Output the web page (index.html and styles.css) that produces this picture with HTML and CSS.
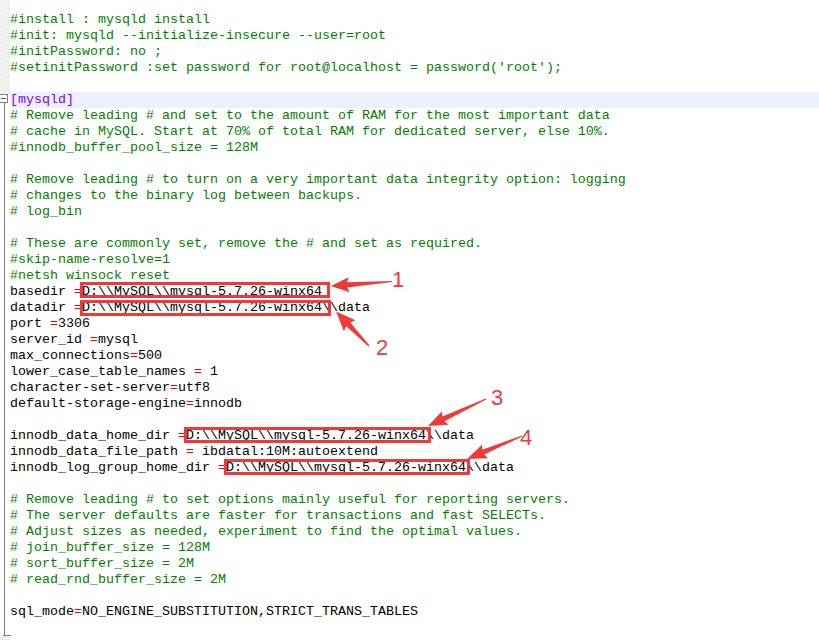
FILE: index.html
```html
<!DOCTYPE html>
<html>
<head>
<meta charset="utf-8">
<link rel="stylesheet" href="styles.css">
</head>
<body>
<div class="editor">
  <div class="margin">
    <div class="margin-top"></div>
    <div class="fold-box"><span class="minus"></span></div>
    <div class="fold-line"></div>
    <div class="fold-end"></div>
    <div class="margin-bottom"></div>
  </div>
  <div class="code">
    <div class="row c">#install : mysqld install</div>
    <div class="row c">#init: mysqld --initialize-insecure --user=root</div>
    <div class="row c">#initPassword: no ;</div>
    <div class="row c">#setinitPassword :set password for root@localhost = password('root');</div>
    <div class="row"></div>
    <div class="row cur"><span class="s">[mysqld]</span></div>
    <div class="row c"># Remove leading # and set to the amount of RAM for the most important data</div>
    <div class="row c"># cache in MySQL. Start at 70% of total RAM for dedicated server, else 10%.</div>
    <div class="row c">#innodb_buffer_pool_size = 128M</div>
    <div class="row"></div>
    <div class="row c"># Remove leading # to turn on a very important data integrity option: logging</div>
    <div class="row c"># changes to the binary log between backups.</div>
    <div class="row c"># log_bin</div>
    <div class="row"></div>
    <div class="row c"># These are commonly set, remove the # and set as required.</div>
    <div class="row c">#skip-name-resolve=1</div>
    <div class="row c">#netsh winsock reset</div>
    <div class="row">basedir <span class="o">=</span>D:\\MySQL\\mysql-5.7.26-winx64</div>
    <div class="row">datadir <span class="o">=</span>D:\\MySQL\\mysql-5.7.26-winx64\\data</div>
    <div class="row">port <span class="o">=</span>3306</div>
    <div class="row">server_id <span class="o">=</span>mysql</div>
    <div class="row">max_connections<span class="o">=</span>500</div>
    <div class="row">lower_case_table_names <span class="o">=</span> 1</div>
    <div class="row">character-set-server<span class="o">=</span>utf8</div>
    <div class="row">default-storage-engine<span class="o">=</span>innodb</div>
    <div class="row"></div>
    <div class="row">innodb_data_home_dir <span class="o">=</span>D:\\MySQL\\mysql-5.7.26-winx64\\data</div>
    <div class="row">innodb_data_file_path <span class="o">=</span> ibdatal:10M:autoextend</div>
    <div class="row">innodb_log_group_home_dir <span class="o">=</span>D:\\MySQL\\mysql-5.7.26-winx64\\data</div>
    <div class="row"></div>
    <div class="row c"># Remove leading # to set options mainly useful for reporting servers.</div>
    <div class="row c"># The server defaults are faster for transactions and fast SELECTs.</div>
    <div class="row c"># Adjust sizes as needed, experiment to find the optimal values.</div>
    <div class="row c"># join_buffer_size = 128M</div>
    <div class="row c"># sort_buffer_size = 2M</div>
    <div class="row c"># read_rnd_buffer_size = 2M</div>
    <div class="row"></div>
    <div class="row">sql_mode<span class="o">=</span>NO_ENGINE_SUBSTITUTION,STRICT_TRANS_TABLES</div>
  </div>
</div>
<svg class="annot" width="819" height="640" viewBox="0 0 819 640">
  <g fill="none" stroke="#f03a3a" stroke-width="3">
    <rect x="81.5" y="283.5" width="247" height="13"/>
    <rect x="81.5" y="301.5" width="248" height="13"/>
    <rect x="185.5" y="428.5" width="244" height="13"/>
    <rect x="225.5" y="460.5" width="243" height="13"/>
  </g>
  <g fill="#f03a3a">
    <polygon transform="translate(392 281.5) rotate(175.8)" points="0,-0.6 45,-2.6 43,-7.5 61.2,0 43,7.5 45,2.6 0,0.6"/>
    <polygon transform="translate(369 346) rotate(-133.7)" points="0,-0.7 30,-2.8 28,-8 47.6,0 28,8 30,2.8 0,0.7"/>
    <polygon transform="translate(486 399) rotate(155)" points="0,-0.6 47,-2.6 45,-7.5 64,0 45,7.5 47,2.6 0,0.6"/>
    <polygon transform="translate(522 436) rotate(157.3)" points="0,-0.6 42,-2.6 40,-7.5 59.6,0 40,7.5 42,2.6 0,0.6"/>
  </g>
  <g class="num" fill="#f03a3a" text-anchor="middle">
    <text x="398" y="287">1</text>
    <text x="382" y="355">2</text>
    <text x="497" y="405">3</text>
    <text x="526" y="445">4</text>
  </g>
</svg>
</body>
</html>
```

FILE: styles.css
```css
html, body {
  margin: 0;
  padding: 0;
  background: #ffffff;
}

body {
  position: relative;
  width: 819px;
  height: 640px;
  overflow: hidden;
}

.editor {
  display: flex;
  height: 640px;
}

.margin {
  width: 10px;
  flex: 0 0 10px;
  display: flex;
  flex-direction: column;
}

.margin-top,
.margin-bottom {
  background: repeating-conic-gradient(#e4e4e4 0 25%, #ffffff 0 50%) 0 0 / 2px 2px;
}

.margin-top {
  height: 94px;
}

.fold-box {
  width: 7px;
  height: 7px;
  border: 1px solid #808080;
  background: #ffffff;
  margin-left: -1px;
  display: flex;
  align-items: center;
  justify-content: center;
}

.minus {
  width: 5px;
  height: 1px;
  background: #606060;
}

.fold-line {
  flex: 1;
  width: 4px;
  border-right: 1px solid #808080;
}

.fold-end {
  height: 1px;
  width: 8px;
  margin-left: 3px;
  background: #808080;
}

.margin-bottom {
  height: 4px;
}

.code {
  flex: 1;
  padding-top: 12px;
  font-family: "Liberation Mono", "DejaVu Sans Mono", monospace;
  font-size: 13.333px;
  color: #000000;
}

.row {
  height: 16px;
  line-height: 16px;
  white-space: pre;
}

.row.cur {
  background: #edf0fd;
}

.c {
  color: #008000;
}

.s {
  color: #8000ff;
}

.o {
  color: #ff0000;
}

.annot {
  position: absolute;
  top: 0;
  left: 0;
  pointer-events: none;
}

.num {
  font-family: "Liberation Sans", Arial, sans-serif;
  font-size: 22px;
}
```
